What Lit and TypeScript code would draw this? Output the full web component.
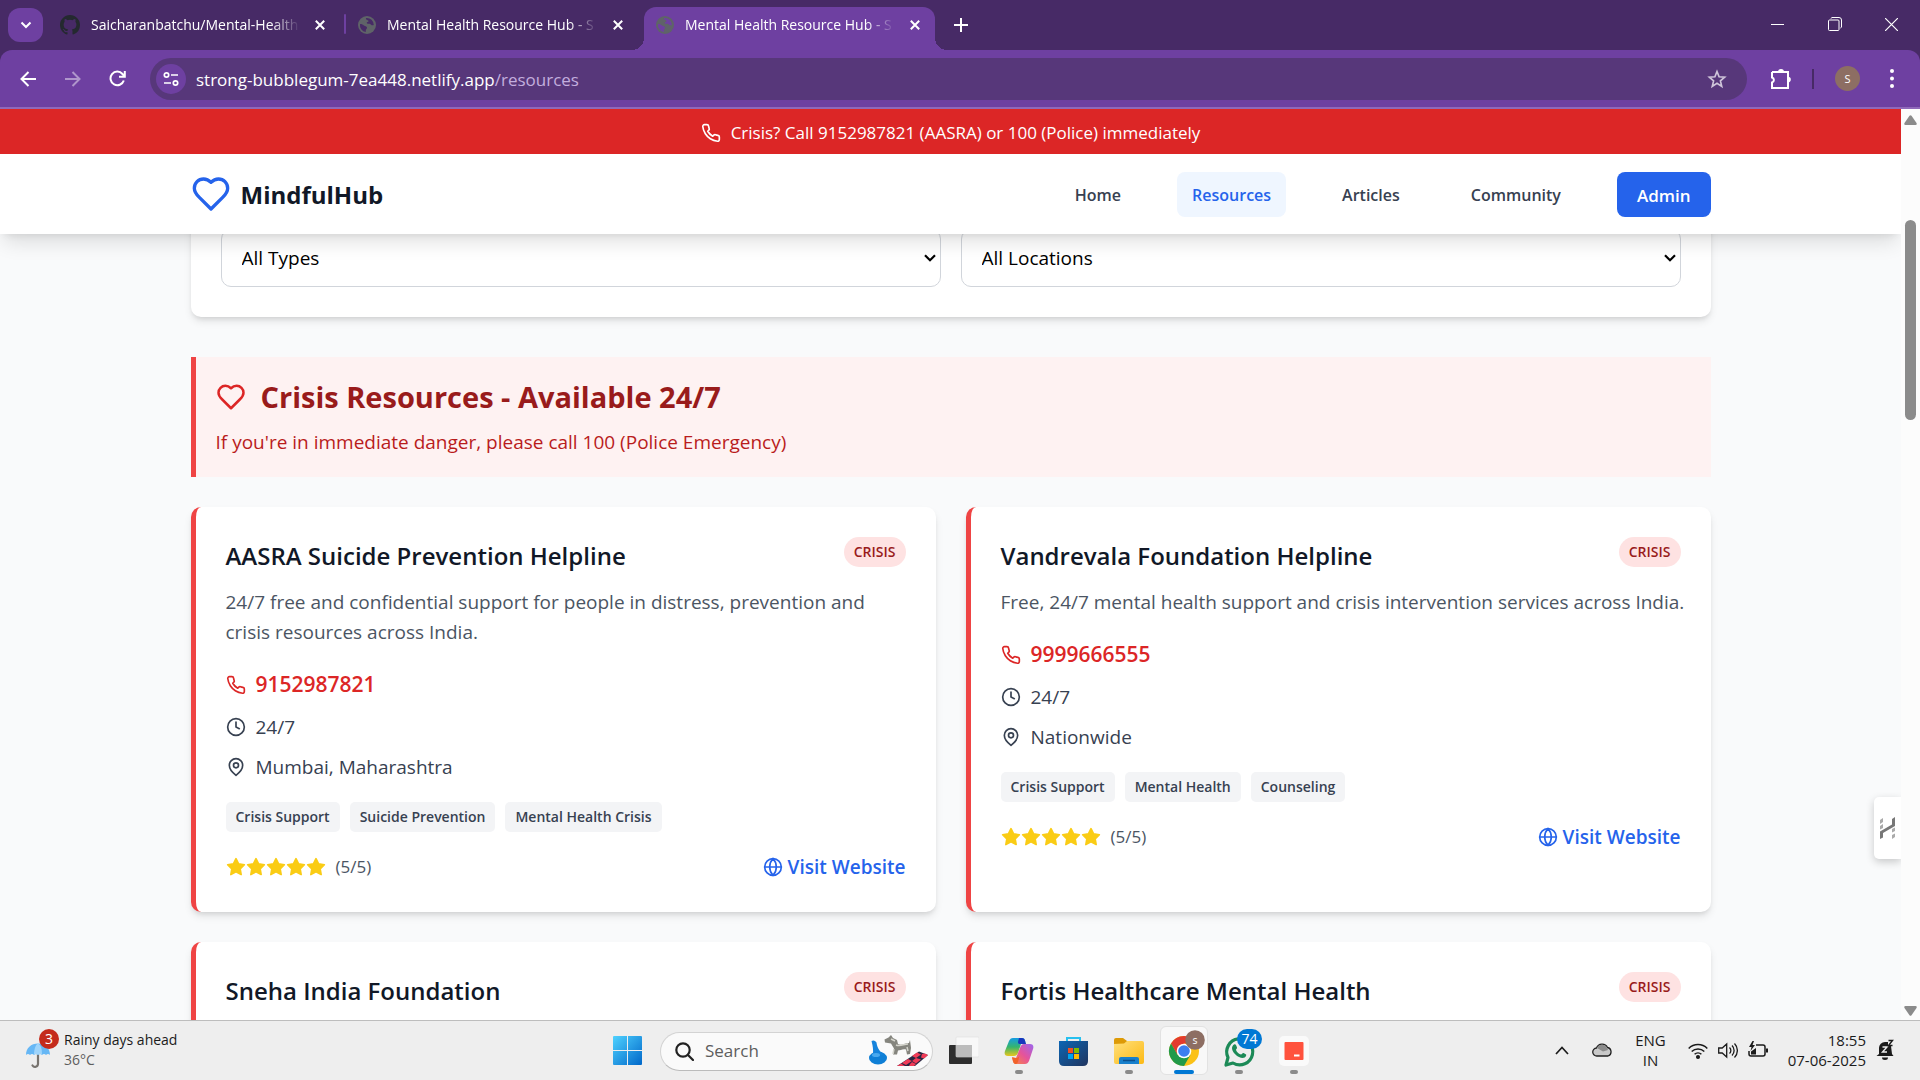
import { LitElement, html, css, svg, nothing } from "lit";
import { customElement, property } from "lit/decorators.js";

interface Resource {
  name: string;
  description?: string;
  phone?: string;
  hours?: string;
  place?: string;
  tags?: string[];
}

const RESOURCES: Resource[] = [
  {
    name: "AASRA Suicide Prevention Helpline",
    description:
      "24/7 free and confidential support for people in distress, prevention and crisis resources across India.",
    phone: "9152987821",
    hours: "24/7",
    place: "Mumbai, Maharashtra",
    tags: ["Crisis Support", "Suicide Prevention", "Mental Health Crisis"],
  },
  {
    name: "Vandrevala Foundation Helpline",
    description: "Free, 24/7 mental health support and crisis intervention services across India.",
    phone: "9999666555",
    hours: "24/7",
    place: "Nationwide",
    tags: ["Crisis Support", "Mental Health", "Counseling"],
  },
  { name: "Sneha India Foundation" },
  { name: "Fortis Healthcare Mental Health" },
];

const line = (size: number, body: unknown, width = 2) => html`<svg
  width=${size} height=${size} viewBox="0 0 24 24" fill="none" stroke="currentColor"
  stroke-width=${width} stroke-linecap="round" stroke-linejoin="round" aria-hidden="true">${body}</svg>`;

const heart = svg`<path d="M19 14c1.49-1.46 3-3.21 3-5.5A5.5 5.5 0 0 0 16.5 3c-1.76 0-3 .5-4.5 2-1.5-1.5-2.74-2-4.5-2A5.5 5.5 0 0 0 2 8.5c0 2.3 1.5 4.05 3 5.5l7 7Z"/>`;
const phone = svg`<path d="M22 16.92v3a2 2 0 0 1-2.18 2 19.79 19.79 0 0 1-8.63-3.07 19.5 19.5 0 0 1-6-6 19.79 19.79 0 0 1-3.07-8.67A2 2 0 0 1 4.11 2h3a2 2 0 0 1 2 1.72 12.84 12.84 0 0 0 .7 2.81 2 2 0 0 1-.45 2.11L8.09 9.91a16 16 0 0 0 6 6l1.27-1.27a2 2 0 0 1 2.11-.45 12.84 12.84 0 0 0 2.81.7A2 2 0 0 1 22 16.92z"/>`;
const clock = svg`<circle cx="12" cy="12" r="10"/><path d="M12 6v6l4 2"/>`;
const pin = svg`<path d="M20 10c0 6-8 12-8 12s-8-6-8-12a8 8 0 0 1 16 0Z"/><circle cx="12" cy="10" r="3"/>`;
const globe = svg`<circle cx="12" cy="12" r="10"/><path d="M12 2a14.5 14.5 0 0 0 0 20 14.5 14.5 0 0 0 0-20M2 12h20"/>`;
const star = svg`<path d="M12 2l3.09 6.26L22 9.27l-5 4.87 1.18 6.88L12 17.77l-6.18 3.25L7 14.14 2 9.27l6.91-1.01L12 2z"/>`;

@customElement("resource-card")
class ResourceCard extends LitElement {
  @property({ attribute: false }) resource!: Resource;

  static styles = css`
    :host { display: block; }
    * { box-sizing: border-box; margin: 0; }
    svg { display: block; flex: none; }
    .card {
      height: 100%; padding: 30px; border-left: 5px solid #ef4444; border-radius: 10px;
      background: #fff; box-shadow: 0 5px 8px -1px #0000001a, 0 3px 5px -2px #0000001a;
    }
    .card.partial { min-height: 405px; }
    .top { display: flex; justify-content: space-between; align-items: flex-start; margin-bottom: 15px; }
    h3 { font-size: 24px; line-height: 37px; height: 35px; font-weight: 600; color: #111827; }
    .badge {
      padding: 0 10px; border-radius: 15px; background: #fee2e2; color: #991b1b;
      font-size: 14px; line-height: 30px; font-weight: 600;
    }
    .about { margin: 0 -5px 20px 0; color: #4b5563; font-size: 19px; line-height: 30px; }
    .row { display: flex; align-items: center; gap: 10px; margin-bottom: 10px; color: #374151; font-size: 19px; line-height: 30px; }
    .call { color: #dc2626; font-size: 21px; line-height: 35px; font-weight: 600; text-decoration: none; }
    .tags { display: flex; gap: 10px; margin: 20px 0; padding: 0; list-style: none; }
    .tags li {
      padding: 0 10px; border-radius: 5px; background: #f3f4f6; color: #374151;
      font-size: 14px; line-height: 30px; font-weight: 600;
    }
    .foot { display: flex; justify-content: space-between; align-items: center; }
    .rating { display: flex; align-items: center; color: #facc15; }
    .rating svg { fill: currentColor; }
    .score { margin-left: 10px; color: #4b5563; font-size: 17px; line-height: 30px; }
    .visit {
      display: flex; align-items: center; gap: 5px; color: #2563eb; font-size: 19px;
      line-height: 30px; font-weight: 600; text-decoration: none;
    }
  `;

  render() {
    const r = this.resource;
    return html`<article class="card ${r.description ? "" : "partial"}">
      <div class="top"><h3>${r.name}</h3><span class="badge">CRISIS</span></div>
      ${r.description
        ? html`<p class="about">${r.description}</p>
            <a class="row call" href="tel:${r.phone}">${line(20, phone)}${r.phone}</a>
            <div class="row">${line(20, clock)}${r.hours}</div>
            <div class="row">${line(20, pin)}${r.place}</div>
            <ul class="tags">${r.tags!.map((t) => html`<li>${t}</li>`)}</ul>
            <div class="foot">
              <div class="rating">${[1, 2, 3, 4, 5].map(() => line(20, star))}<span class="score">(5/5)</span></div>
              <a class="visit" href="#site">${line(20, globe)}Visit Website</a>
            </div>`
        : nothing}
    </article>`;
  }
}

const tabGlobe = html`<svg width="18" height="18" viewBox="0 0 18 18" aria-hidden="true">
  <circle cx="9" cy="9" r="9" fill="#5f6368"/>
  <path d="M2 8c2 0 3 .6 4 1.600 1 .9 2.600.6 3 2 .3 1.200-1.200 1.600-1.200 3v1.500A7.200 7.200 0 0 1 2 8zM8 2c-.3 1.500.7 2 1.800 2.200 1.200.3.8 1.600-.2 1.800-1.200.2-1 1.500.2 1.700 1.500.2 2-.2 3 .8.9.9 1.800 1 3 .6A7 7 0 0 0 8 2z" fill="var(--hole)"/>
</svg>`;
const github = html`<svg width="20" height="20" viewBox="0 0 16 16" fill="#24292f" aria-hidden="true">
  <path d="M8 0C3.58 0 0 3.58 0 8c0 3.540 2.290 6.530 5.470 7.590.4.070.55-.17.55-.38 0-.19-.01-.82-.01-1.490-2.010.37-2.530-.49-2.690-.94-.09-.23-.48-.94-.82-1.130-.28-.15-.68-.52-.01-.53.63-.01 1.080.58 1.230.82.72 1.210 1.870.87 2.330.66.07-.52.28-.87.51-1.070-1.780-.2-3.640-.89-3.640-3.950 0-.87.31-1.590.82-2.150-.08-.2-.36-1.020.08-2.120 0 0 .67-.21 2.200.82a7.600 7.600 0 0 1 4 0c1.530-1.040 2.200-.82 2.200-.82.44 1.100.16 1.920.08 2.120.51.56.82 1.270.82 2.150 0 3.070-1.870 3.750-3.650 3.950.29.25.54.73.54 1.480 0 1.070-.01 1.930-.01 2.200 0 .21.15.46.55.38A8 8 0 0 0 16 8c0-4.420-3.580-8-8-8z"/></svg>`;
const cross = html`<svg width="10" height="10" viewBox="0 0 10 10" stroke="currentColor" stroke-width="2" aria-hidden="true"><path d="M.8.8l8.400 8.400M9.200.8L.8 9.200"/></svg>`;

@customElement("browser-chrome")
class BrowserChrome extends LitElement {
  static styles = css`
    :host { display: block; background: #472a66; color: #fff; --hole: #472a66; }
    * { box-sizing: border-box; margin: 0; }
    svg { display: block; flex: none; }
    button { padding: 0; border: 0; background: none; color: inherit; font: inherit; display: grid; place-items: center; }
    .strip { display: flex; height: 50px; padding-left: 8px; }
    .menu { width: 35px; height: 34px; margin: 8px 5px 0 0; border-radius: 12px; background: #6e40a1; }
    .tab { display: flex; align-items: center; width: 298px; height: 43px; margin-top: 7px; padding: 0 16px 7px 12px; font-size: 14px; line-height: 20px; }
    .tab .name {
      flex: 1; height: 20px; margin-left: 11px; overflow: hidden; white-space: nowrap; text-align: left;
      -webkit-mask-image: linear-gradient(90deg, #000 86%, transparent);
      mask-image: linear-gradient(90deg, #000 86%, transparent);
    }
    .tab .x { width: 20px; height: 20px; margin-left: 10px; }
    .rule { width: 2px; height: 20px; margin: 14px 0 0 -2px; border-radius: 1px; background: #6e40a1; }
    .active { --hole: #6e40a1; position: relative; width: 291px; padding-left: 12px; padding-right: 10px; background: #6e40a1; border-radius: 12px 12px 0 0; }
    .active::before, .active::after { content: ""; position: absolute; bottom: 0; width: 12px; height: 12px; }
    .active::before { right: 100%; background: radial-gradient(circle at 0 0, #0000 12px, #6e40a1 12px); }
    .active::after { left: 100%; background: radial-gradient(circle at 100% 0, #0000 12px, #6e40a1 12px); }
    .add { width: 32px; margin-left: 10px; }
    .window { display: flex; margin-left: auto; height: 48px; }
    .window button { width: 57px; }
    .bar {
      display: flex; align-items: center; height: 59px; padding: 0 13px 0 5px; background: #6e40a1;
      border-bottom: 2px solid #9069b9; border-radius: 12px 12px 0 0;
    }
    .nav { width: 45px; height: 40px; }
    .dim { opacity: 0.45; }
    .address { display: flex; align-items: center; flex: 1; height: 42px; margin-left: 10px; padding: 0 20px 0 6px; border-radius: 21px; background: #57377a; }
    .info { width: 30px; height: 30px; border-radius: 15px; background: #6e40a1; }
    .url { flex: 1; min-width: 0; margin-left: 10px; padding-top: 2px; font-size: 17px; line-height: 24px; white-space: nowrap; }
    .url span { color: #c3aede; }
    .ext { width: 40px; margin-left: 14px; }
    .sep { width: 2px; height: 20px; margin: 0 21px 0 11px; background: #472a66; }
    .avatar { width: 25px; height: 25px; border-radius: 50%; background: #8d6e63; font-size: 11px; }
    .dots { width: 31px; margin-left: 16px; }
  `;

  private tab(icon: unknown, title: string, active = false) {
    return html`<div class="tab ${active ? "active" : ""}">${icon}<span class="name">${title}</span>
      <button class="x" aria-label="Close tab">${cross}</button></div>`;
  }

  render() {
    return html`
      <div class="strip">
        <button class="menu" aria-label="Search tabs"><svg width="12" height="8" viewBox="0 0 12 8" fill="none" stroke="#fff" stroke-width="2"><path d="M1.500 1.500L6 6l4.500-4.500"/></svg></button>
        ${this.tab(github, "Saicharanbatchu/Mental-Health")}
        <span class="rule"></span>
        ${this.tab(tabGlobe, "Mental Health Resource Hub - S")}
        ${this.tab(tabGlobe, "Mental Health Resource Hub - S", true)}
        <button class="add" aria-label="New tab"><svg width="14" height="14" viewBox="0 0 14 14" stroke="#fff" stroke-width="2"><path d="M7 0v14M0 7h14"/></svg></button>
        <div class="window">
          <button aria-label="Minimize"><svg width="13" height="13" viewBox="0 0 13 13" stroke="#fff"><path d="M0 6.500h13"/></svg></button>
          <button aria-label="Restore"><svg width="14" height="14" viewBox="0 0 14 14" fill="none" stroke="#fff"><rect x=".5" y="3" width="10.500" height="10.500" rx="1"/><path d="M3 1.500a1.500 1.500 0 0 1 1-1h7a2.500 2.500 0 0 1 2.500 2.500v7a1.500 1.500 0 0 1-1 1"/></svg></button>
          <button aria-label="Close"><svg width="13" height="13" viewBox="0 0 13 13" stroke="#fff" stroke-width="1.200"><path d="M0 0l13 13M13 0L0 13"/></svg></button>
        </div>
      </div>
      <div class="bar">
        <button class="nav" aria-label="Back"><svg width="16" height="16" viewBox="0 0 16 16" fill="none" stroke="#fff" stroke-width="2"><path d="M16 8H2M8.500 1L1.500 8l7 7"/></svg></button>
        <button class="nav dim" aria-label="Forward"><svg width="16" height="16" viewBox="0 0 16 16" fill="none" stroke="#fff" stroke-width="2"><path d="M0 8h14M7.500 1l7 7-7 7"/></svg></button>
        <button class="nav" aria-label="Reload"><svg width="17" height="17" viewBox="0 0 17 17" fill="none" stroke="#fff" stroke-width="2"><path d="M14.800 10.500A6.800 6.800 0 1 1 13.500 4L15.500 6.200M15.800 1v5.800H10"/></svg></button>
        <div class="address">
          <button class="info" aria-label="Site information"><svg width="16" height="16" viewBox="0 0 16 16" fill="none" stroke="#fff" stroke-width="1.700"><circle cx="3.500" cy="4" r="2.200"/><path d="M8 4h7M1 12h7"/><circle cx="12.500" cy="12" r="2.200"/></svg></button>
          <div class="url">strong-bubblegum-7ea448.netlify.app<span>/resources</span></div>
          <button aria-label="Bookmark"><svg width="20" height="20" viewBox="0 0 24 24" fill="none" stroke="#cfc5da" stroke-width="2"><path d="M12 3l2.500 6.300 6.700.5-5.100 4.400 1.600 6.600L12 17.200l-5.700 3.600 1.600-6.600-5.100-4.400 6.700-.5z"/></svg></button>
        </div>
        <button class="ext" aria-label="Extensions"><svg width="22" height="22" viewBox="0 0 22 22" fill="none" stroke="#fff" stroke-width="2"><path d="M2 4h6.500M13.500 4H18v5M18 14v6H2v-5.500a2.600 2.600 0 0 0 0-5V4"/><path d="M8 4a3 3 0 0 1 6 0zM18 8.800a2.800 2.800 0 0 1 0 5.600z" fill="#fff" stroke="none"/><path d="M8 4h6M18 8v6"/></svg></button>
        <span class="sep"></span>
        <button class="avatar" aria-label="Profile">S</button>
        <button class="dots" aria-label="Menu"><svg width="4" height="19" viewBox="0 0 4 19" fill="#fff"><circle cx="2" cy="2" r="2"/><circle cx="2" cy="9.500" r="2"/><circle cx="2" cy="17" r="2"/></svg></button>
      </div>
    `;
  }
}

@customElement("task-bar")
class TaskBar extends LitElement {
  static styles = css`
    :host { display: grid; grid-template-columns: 1fr auto 1fr; height: 60px; background: #eee; border-top: 1px solid #bdbdbd; color: #1b1b1b; font-size: 14px; line-height: 20px; }
    * { box-sizing: border-box; margin: 0; }
    svg { display: block; flex: none; }
    button { padding: 0; border: 0; background: none; color: inherit; font: inherit; display: grid; place-items: center; }
    .weather { display: flex; align-items: center; gap: 4px; padding: 0 0 2px 24px; justify-self: start; text-align: left; }
    .muted { color: #5d5d5d; }
    .middle { display: flex; align-items: center; padding-left: 1px; }
    .app { position: relative; width: 55px; height: 60px; }
    .app::after { content: ""; position: absolute; bottom: 7px; left: 24px; width: 8px; height: 4px; border-radius: 2px; background: #8a8a8a; }
    .plain::after { display: none; }
    .current::before { content: ""; position: absolute; inset: 5px 3px 6px 4px; border: 1px solid #e2e2e2; border-radius: 6px; background: #f8f8f8; }
    .current::after { left: 18px; width: 20px; background: #0078d4; }
    .app svg { position: relative; }
    .search { display: flex; align-items: center; width: 273px; height: 39px; margin: 0 3px 0 5px; padding: 0 3px 0 14px; border: 1px solid #d3d3d3; border-bottom-color: #bbb; border-radius: 20px; background: #fafafa; }
    .search input { flex: 1; min-width: 0; margin-left: 11px; padding: 0; border: 0; outline: 0; background: none; font: inherit; font-size: 17px; }
    .search input::placeholder { color: #5d5d5d; opacity: 1; }
    .tray { display: flex; align-items: center; justify-self: end; padding: 0 25px 2px 0; font-size: 15px; }
    .tray button { width: 20px; height: 40px; }
    .more { margin-right: 20px; }
    .lang { margin: 0 22px 0 23px; text-align: center; }
    .status { display: flex; gap: 10px; }
    .clock { margin: 0 10px 0 19px; text-align: right; }
  `;

  render() {
    return html`
      <button class="weather">
        <svg width="36" height="44" viewBox="0 0 36 44">
          <path d="M14 18v18a3 3 0 0 1-5.500 1.500" fill="none" stroke="#77736e" stroke-width="2.200" stroke-linecap="round"/>
          <path d="M2 27C2 20 7 15.500 14 15.500S26 20 26 27q-2-2-4 0-2-2-4 0-2-2-4 0-2-2-4 0-2-2-4 0-2-2-4 0z" fill="#66b7f5"/>
          <path d="M14 15.500c4 2 4 8 4 11.500q-2-2-4 0-2-2-4 0c0-4 1-10 4-11.500z" fill="#9ed4fb"/>
          <circle cx="25" cy="11" r="10" fill="#c42b1c"/>
          <text x="25" y="16" text-anchor="middle" font-size="14" fill="#fff">3</text>
        </svg>
        <span>Rainy days ahead<br><span class="muted">36°C</span></span>
      </button>
      <div class="middle">
        <button class="app plain" aria-label="Start"><svg width="30" height="30" viewBox="0 0 30 30">
          <defs><linearGradient id="w" x1="0" y1="0" x2="1" y2="1"><stop stop-color="#4fd2ff"/><stop offset="1" stop-color="#0067c9"/></linearGradient></defs>
          <path d="M0 1q0-1 1-1h13v14H0zM15 0h13q1 0 1 1v13H15zM0 15h14v14H1q-1 0-1-1zM15 15h14v13q0 1-1 1H15z" fill="url(#w)"/></svg></button>
        <label class="search">
          <svg width="19" height="19" viewBox="0 0 19 19" fill="none" stroke="#222" stroke-width="2.200"><circle cx="8" cy="8" r="6.700"/><path d="M13 13l5 5" stroke-linecap="round"/></svg>
          <input type="text" placeholder="Search" aria-label="Search">
          <svg width="60" height="34" viewBox="0 0 60 34">
            <ellipse cx="9" cy="24" rx="9" ry="6.500" fill="#0f7fd6"/><path d="M2.500 7a3.500 3.500 0 0 1 5 1.500c.5 4 2 8 7 12L3 24c2-6 1-11-.5-17z" fill="#1583dc"/><ellipse cx="7" cy="21" rx="4" ry="2" fill="#49a9ef"/>
            <path d="M22 1l2 3 4 2 1 4c4 2 7-1 11-1l1-3 1 8-1 6-3 .5-1-5c-3-1-6 1-8 1l-1 4h-4l1-6-3-5-6-1-.5-3 4-2z" fill="#85857e"/><path d="M22 5l4 2M27 11c4 2 8-1 12-1M25 15l-1 5M38 13l1 4" stroke="#d4d4cc" stroke-width="1.500" fill="none"/>
            <path d="M28 32L50 17.500 59 21 46 32z" fill="#272742"/><path d="M33 29l6-4 4 2-6 4zM43 22l5-3.500 4 2-5 3.500zM43 27l4-3 5 1.500-5 4zM53 20l3-.5 3 1.500-4 3.500-3-1zM28 32l4-2.500 4 2.500zM41 30l2-2 4 2-2 2h-5z" fill="#f13b57"/>
          </svg>
        </label>
        <button class="app plain" aria-label="Task view"><svg width="30" height="30" viewBox="0 0 30 30">
          <rect y="9" width="23" height="19" rx="1" fill="#2d2d2d"/><rect x="7" y="1" width="23" height="20" rx="1" fill="#f8f8f8" stroke="#ddd" stroke-width=".6"/><path d="M7 9h16v12H7z" fill="#bcbcbc"/></svg></button>
        <button class="app" aria-label="Copilot"><svg width="30" height="30" viewBox="0 0 30 30">
          <defs><linearGradient id="c1" x1="0" y1="0" x2="0" y2="1"><stop stop-color="#159ce4"/><stop offset=".5" stop-color="#35b56c"/><stop offset="1" stop-color="#e8c61d"/></linearGradient>
          <linearGradient id="c2" x1="1" y1="0" x2="0" y2="1"><stop stop-color="#9b66ee"/><stop offset=".5" stop-color="#e5539b"/><stop offset="1" stop-color="#fb8a3c"/></linearGradient></defs>
          <path d="M9 2h9c3 0 3 3 4 6h-5l-3 9c-1 2-2 3-4 3H4c-3 0-4-2-3-5L5 5c1-2 2-3 4-3z" fill="url(#c1)"/>
          <path d="M15 2h3c3 0 3 3 4 6h-5c-2 0-3 0-3-2z" fill="#1736bd"/>
          <path d="M21 28h-9c-3 0-3-3-4-6h4l4-10c1-3 2-4 4-4h6c3 0 4 2 3 5l-4 12c-1 2-2 3-4 3z" fill="url(#c2)"/>
          <path d="M8 21l4 1c2 0 3-1 3.500-3L14 26c-1 2-2 2-3 2-2-1-2-4-3-7z" fill="#f1622b"/></svg></button>
        <button class="app plain" aria-label="Store"><svg width="30" height="30" viewBox="0 0 30 30">
          <defs><linearGradient id="s" x1="0" y1="0" x2="1" y2="1"><stop stop-color="#0c66b4"/><stop offset="1" stop-color="#20345e"/></linearGradient></defs>
          <path d="M8 6V2h13v4" fill="none" stroke="#27c0ef" stroke-width="2"/><path d="M0 5h29v20q0 5-5 5H5q-5 0-5-5z" fill="url(#s)"/>
          <path d="M9 12h5v5H9z" fill="#f25022"/><path d="M15 12h5v5h-5z" fill="#7fba00"/><path d="M9 18h5v5H9z" fill="#00a4ef"/><path d="M15 18h5v5h-5z" fill="#ffb900"/></svg></button>
        <button class="app" aria-label="File Explorer"><svg width="30" height="30" viewBox="0 0 30 30">
          <defs><linearGradient id="f" x1="0" y1="0" x2="1" y2="1"><stop stop-color="#ffe07c"/><stop offset="1" stop-color="#fcb913"/></linearGradient></defs>
          <path d="M0 4q0-2 2-2h7l4 3v4H0z" fill="#dd9a06"/><path d="M0 8l10-.5L13 5h15q2 0 2 2v19q0 2-2 2H2q-2 0-2-2z" fill="url(#f)"/>
          <path d="M5 28v-5q0-2 2-2h16q2 0 2 2v5z" fill="#1880cc"/><path d="M9 24.500h12" stroke="#0b4f8d" stroke-width="1.500"/></svg></button>
        <button class="app current" aria-label="Google Chrome"><svg width="42" height="42" viewBox="-6 -6 42 42">
          <circle cx="15" cy="15" r="15" fill="#fbc116"/><path d="M2 7.500A15 15 0 0 1 28 7.500H15L8.500 18.800z" fill="#e33b2e"/><path d="M2 7.500a15 15 0 0 0 13 22.500l6.500-11.200H8.500z" fill="#229a49"/>
          <circle cx="15" cy="15" r="7.300" fill="#fff"/><circle cx="15" cy="15" r="5.800" fill="#3c7ef0"/>
          <circle cx="26" cy="4" r="9.800" fill="#8d6e63"/><text x="26" y="7.500" text-anchor="middle" font-size="9" font-weight="600" fill="#eee">S</text></svg></button>
        <button class="app" aria-label="WhatsApp, 74 unread"><svg width="46" height="46" viewBox="-8 -8 46 46">
          <path d="M2 29l2-7.500A13 13 0 1 1 9 27z" fill="none" stroke="#1c8a57" stroke-width="3.200" stroke-linejoin="round"/>
          <path d="M10 8.500c1.500-.8 2 0 3 3 .3 1-1 1.500-1 2.500 1 2.500 3 4 5 4.500 1 0 1.500-2 2.500-1.500 3 1.500 3 1.500 2.500 3-.8 2.200-4 2.500-7 1-4-2-7-6-7-9 0-1.500 1-3 2-3.500z" fill="#1c8a57"/>
          <rect x="13" y="-7" width="25" height="20" rx="10" fill="#0078d4"/><text x="25.500" y="8" text-anchor="middle" font-size="14" fill="#fff">74</text></svg></button>
        <button class="app" aria-label="Screen recorder"><svg width="30" height="30" viewBox="0 0 30 30">
          <rect width="30" height="30" rx="5" fill="#fafafa"/><rect x="5.500" y="6" width="19" height="18" rx="1" fill="#ff523d"/><path d="M15 19.500h5.500" stroke="#fff" stroke-width="2"/></svg></button>
      </div>
      <div class="tray">
        <button class="more" aria-label="Hidden icons"><svg width="14" height="9" viewBox="0 0 14 9" fill="none" stroke="#1b1b1b" stroke-width="1.700"><path d="M1 8l6-6.500L13 8"/></svg></button>
        <button aria-label="OneDrive"><svg width="21" height="14" viewBox="0 0 21 14"><path d="M5 13a4 4 0 0 1-.5-8A6 6 0 0 1 15.500 4.500 4.400 4.400 0 0 1 16 13z" fill="#c9c9c9" stroke="#222" stroke-width="1.300"/><path d="M5 5A5.500 5.500 0 0 1 15 5l1 2-5 1.500z" fill="#8b8b8b"/></svg></button>
        <div class="lang">ENG<br>IN</div>
        <div class="status">
          <svg width="20" height="20" viewBox="0 0 20 20" fill="none" stroke="#1b1b1b" stroke-width="1.500"><path d="M.7 8.500a13 13 0 0 1 18.600 0M3.700 11.500a9 9 0 0 1 12.600 0M6.600 14.300a4.900 4.900 0 0 1 6.800 0"/><circle cx="10" cy="17" r="1.300" fill="#1b1b1b"/></svg>
          <svg width="20" height="20" viewBox="0 0 20 20" fill="none" stroke="#1b1b1b" stroke-width="1.300"><path d="M.7 8v5h3.500l4.500 4V4L4.200 8zM11.500 7.500a4 4 0 0 1 0 6M14 5.500a7 7 0 0 1 0 10M16.500 3.500a10 10 0 0 1 0 14"/></svg>
          <svg width="21" height="20" viewBox="0 0 21 20" fill="none" stroke="#1b1b1b" stroke-width="1.500"><path d="M8 5h7a2 2 0 0 1 2 2v7a2 2 0 0 1-2 2H3a2 2 0 0 1-2-2v-3"/><path d="M18 8.500h2v4h-2zM4.500 1L1 7h2.500L2.500 11 7 5H4.500L6 1zM3 14.500v-3L8 8v6.500z" fill="#1b1b1b" stroke="none"/></svg>
        </div>
        <div class="clock">18:55<br>07-06-2025</div>
        <svg width="19" height="22" viewBox="0 0 19 22" fill="#1b1b1b"><path d="M3 15V9a6 6 0 0 1 6-6h3v4h3l1 8 1.500 2H.5zM6 18.500h6a3 2.500 0 0 1-6 0z"/><path d="M6.500 8h4.500l-4.500 5h4.500" fill="none" stroke="#eee" stroke-width="1.400"/><path d="M12.500 1.500h4l-4 5h4" fill="none" stroke="#1b1b1b" stroke-width="1.400"/></svg>
      </div>
    `;
  }
}

@customElement("app-root")
class AppRoot extends LitElement {
  static styles = css`
    :host { display: flex; flex-direction: column; height: 100vh; overflow: hidden; background: #f9fafb; font-family: "Open Sans", "Noto Sans", sans-serif; }
    * { box-sizing: border-box; margin: 0; }
    svg { display: block; flex: none; }
    .view { display: flex; flex: 1; min-height: 0; }
    .page { position: relative; flex: 1; min-width: 0; overflow: hidden; }
    .alert { position: relative; z-index: 2; display: flex; align-items: center; justify-content: center; gap: 10px; height: 45px; padding-top: 2px; background: #dc2626; color: #fff; font-size: 17px; line-height: 25px; }
    header { position: relative; z-index: 1; height: 80px; background: #fff; box-shadow: 0 12px 19px -4px #0000001f, 0 5px 8px -5px #0000001a; }
    .wrap { max-width: 1600px; margin: 0 auto; padding: 0 40px; }
    header .wrap { display: flex; align-items: center; justify-content: space-between; height: 80px; }
    .brand { display: flex; align-items: center; gap: 10px; color: #111827; font-size: 24px; line-height: 35px; font-weight: 700; text-decoration: none; }
    .brand svg { color: #2563eb; }
    nav { display: flex; gap: 41px; }
    nav a { padding: 11px 15px 9px; border-radius: 8px; color: #374151; font-size: 16px; line-height: 25px; font-weight: 600; text-decoration: none; }
    nav .here { background: #eff6ff; color: #2563eb; }
    nav .admin { padding: 11px 20px 9px; background: #2563eb; color: #fff; font-size: 17px; }
    main.wrap { margin-top: -35px; }
    .filters { display: grid; grid-template-columns: 1fr 1fr; gap: 20px; padding: 30px; border-radius: 10px; background: #fff; box-shadow: 0 5px 8px -1px #0000001a, 0 3px 5px -2px #0000001a; }
    .pick { display: grid; align-items: center; }
    .pick > * { grid-area: 1 / 1; }
    .pick svg { justify-self: end; margin-right: 5px; pointer-events: none; }
    select { appearance: none; width: 100%; height: 58px; padding: 0 20px; border: 1px solid #d1d5db; border-radius: 10px; background: #fff; color: #000; font: inherit; font-size: 19px; }
    .crisis { margin: 40px 0 30px; padding: 20px; border-left: 5px solid #ef4444; background: #fef2f2; }
    .crisis h2 { display: flex; align-items: center; gap: 15px; margin-bottom: 10px; color: #991b1b; font-size: 29px; line-height: 40px; font-weight: 700; }
    .crisis h2 svg { color: #dc2626; }
    .crisis p { color: #b91c1c; font-size: 19px; line-height: 30px; }
    .cards { display: grid; grid-template-columns: 1fr 1fr; gap: 30px; }
    .widget { position: absolute; z-index: 3; right: 0; top: 688px; display: grid; place-items: center; width: 27px; height: 62px; padding: 0; border: 0; border-radius: 5px 0 0 5px; background: #fff; box-shadow: 0 3px 8px #0003; }
    .scroll { display: flex; flex-direction: column; justify-content: space-between; align-items: center; width: 19px; padding: 6px 0 4px; background: #fcfcfc; }
    .scroll i { width: 11px; height: 200px; margin: 95px 0 auto; border-radius: 6px; background: #8b8b8b; }
  `;

  private pick(name: string) {
    return html`<label class="pick"><select aria-label=${name}><option>${name}</option></select>
      <svg width="12" height="8" viewBox="0 0 12 8" fill="none" stroke="#000" stroke-width="2.200"><path d="M1 1.200l5 5 5-5"/></svg></label>`;
  }

  render() {
    return html`
      <browser-chrome></browser-chrome>
      <div class="view">
        <div class="page">
          <div class="alert">${line(20, phone)}<span>Crisis? Call 9152987821 (AASRA) or 100 (Police) immediately</span></div>
          <header><div class="wrap">
            <a class="brand" href="#home">${line(40, heart)}<span>MindfulHub</span></a>
            <nav>
              <a href="#home">Home</a><a class="here" href="#resources">Resources</a><a href="#articles">Articles</a>
              <a href="#community">Community</a><a class="admin" href="#admin">Admin</a>
            </nav>
          </div></header>
          <main class="wrap">
            <section class="filters">${this.pick("All Types")}${this.pick("All Locations")}</section>
            <section class="crisis">
              <h2>${line(30, heart)}<span>Crisis Resources - Available 24/7</span></h2>
              <p>If you're in immediate danger, please call 100 (Police Emergency)</p>
            </section>
            <section class="cards">${RESOURCES.map((r) => html`<resource-card .resource=${r}></resource-card>`)}</section>
          </main>
          <button class="widget" aria-label="Assistant"><svg width="16" height="22" viewBox="0 0 16 22">
            <path d="M0 22V14.500L12 7.500V2L15 0v9L3 16v4.500z" fill="#777"/>
            <path d="M0 3l3-2v4L0 7zM0 9l3-2v4l-3 1.500zM12 12l3-1.500v3.500l-3 1.500zM12 18l3-1.500V20l-3 2z" fill="#aaa"/></svg></button>
        </div>
        <div class="scroll" aria-hidden="true">
          <svg width="13" height="10" viewBox="0 0 13 10" fill="#8b8b8b"><path d="M5.500.8q1-1.200 2 0L12.500 8q.8 2-1 2h-10q-1.800 0-1-2z"/></svg>
          <i></i>
          <svg width="13" height="10" viewBox="0 0 13 10" fill="#8b8b8b"><path d="M5.500 9.200q1 1.200 2 0L12.500 2q.8-2-1-2h-10q-1.800 0-1 2z"/></svg>
        </div>
      </div>
      <task-bar></task-bar>
    `;
  }
}
